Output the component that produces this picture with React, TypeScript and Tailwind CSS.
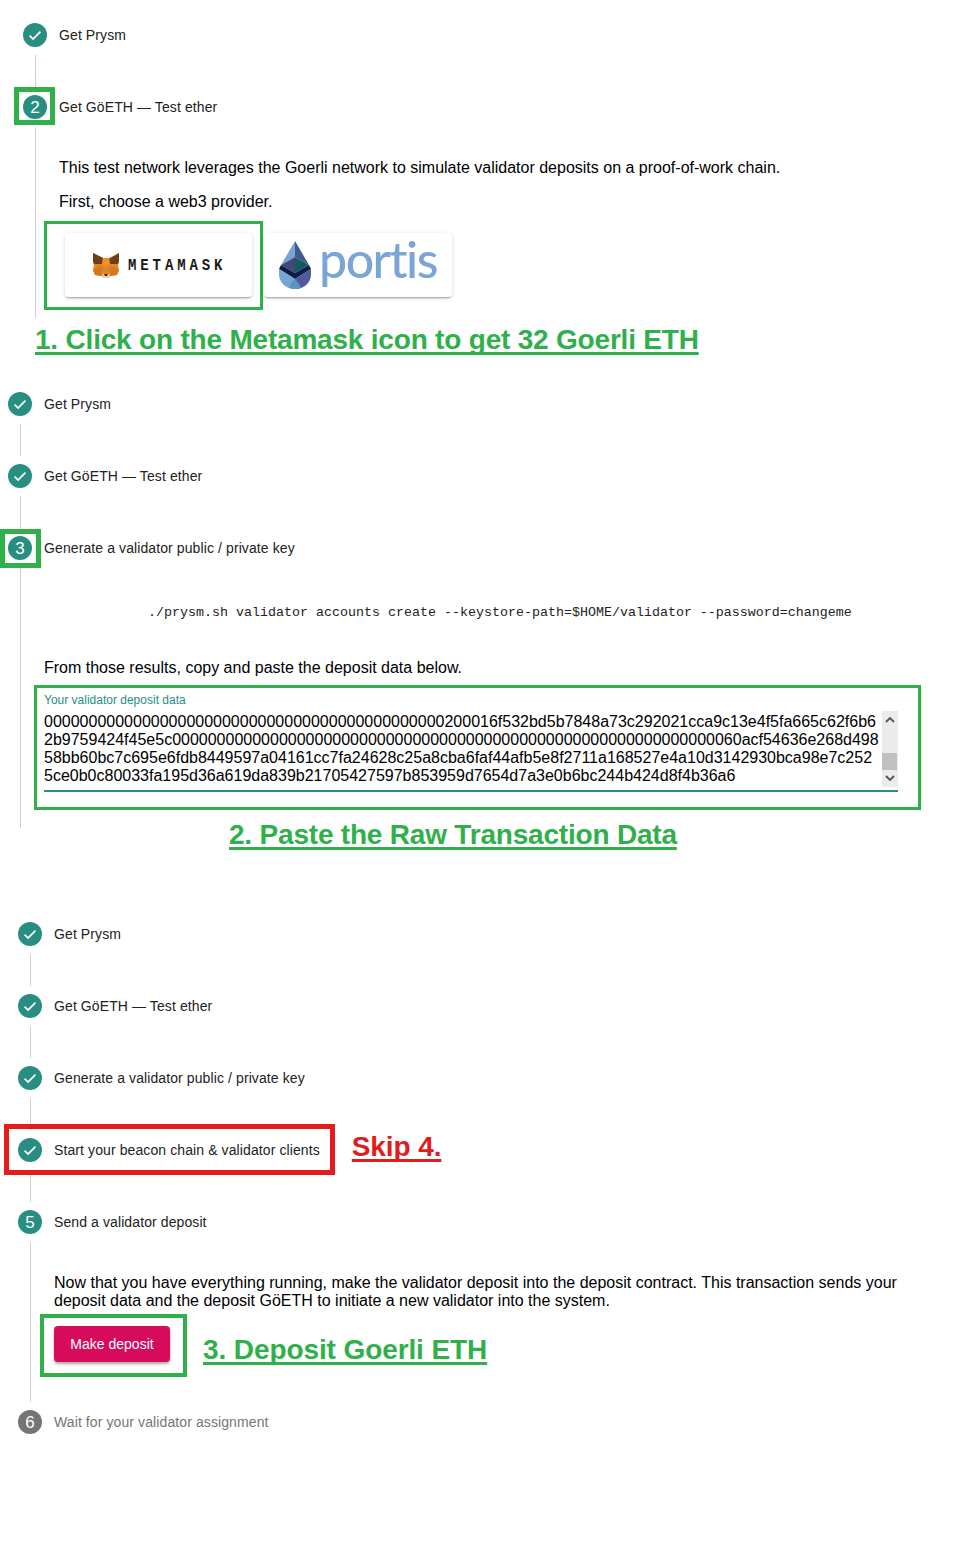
import React from 'react';

const depositLines = [
  '000000000000000000000000000000000000000000000200016f532bd5b7848a73c292021cca9c13e4f5fa665c62f6b6',
  '2b9759424f45e5c0000000000000000000000000000000000000000000000000000000000000060acf54636e268d498',
  '58bb60bc7c695e6fdb8449597a04161cc7fa24628c25a8cba6faf44afb5e8f2711a168527e4a10d3142930bca98e7c252',
  '5ce0b0c80033fa195d36a619da839b21705427597b853959d7654d7a3e0b6bc244b424d8f4b36a6',
];

function CheckIcon() {
  return (
    <span className="flex h-6 w-6 shrink-0 items-center justify-center rounded-full bg-[#288e82]">
      <svg width="24" height="24" viewBox="0 0 24 24" fill="none">
        <path d="M6.6 12.6l3.5 3.4 7.3-7.4" stroke="#fff" strokeWidth="1.7" />
      </svg>
    </span>
  );
}

function NumberIcon({ n, muted }: { n: number; muted?: boolean }) {
  return (
    <span
      className={`flex h-6 w-6 shrink-0 items-center justify-center rounded-full text-[17px] leading-none text-white ${
        muted ? 'bg-[#757575]' : 'bg-[#288e82]'
      }`}
    >
      {n}
    </span>
  );
}

function Step({ icon, label, muted }: { icon: React.ReactNode; label: string; muted?: boolean }) {
  return (
    <div className="flex h-6 items-center gap-3">
      {icon}
      <span className={`text-sm tracking-[0.1px] whitespace-nowrap ${muted ? 'text-[#757575]' : 'text-[#222222]'}`}>
        {label}
      </span>
    </div>
  );
}

function Connector() {
  return <div className="my-2 ml-3 h-8 w-px bg-[#cfcfcf]" />;
}

function Callout({ children, className }: { children: React.ReactNode; className?: string }) {
  return (
    <div
      className={`text-[28px] leading-8 font-bold whitespace-nowrap underline decoration-[3px] underline-offset-[3px] [text-decoration-skip-ink:none] ${className ?? ''}`}
    >
      {children}
    </div>
  );
}

function FoxLogo() {
  return (
    <svg width="26" height="25" viewBox="0 0 26 25">
      <polygon
        points="0,0 10,5 16,5 26,0 26,8 25,12 26,17 24,22 17,23 15,25 11,25 9,23 2,22 0,17 1,12 0,8"
        fill="#e5851f"
      />
      <polygon points="0,0 10,5 9,11 1,11 0,8" fill="#6f3f17" />
      <polygon points="26,0 16,6 17,11 25,11 26,8" fill="#6f3f17" />
      <polygon points="10,5 16,5 17,11 13,15 9,11" fill="#ee8f2a" />
      <polygon points="0,17 8,13 9,23 2,22" fill="#d8771a" />
      <polygon points="26,17 18,13 17,23 24,22" fill="#d8771a" />
      <polygon points="8,14 12,16 10,18" fill="#b9834f" />
      <polygon points="18,14 14,16 16,18" fill="#b9834f" />
      <polygon points="9,21 17,21 15,25 11,25" fill="#e2d2bd" />
      <polygon points="11,21 15,21 14,23 12,23" fill="#33261c" />
    </svg>
  );
}

function PortisLogo() {
  return (
    <svg width="32" height="48" viewBox="0 0 32 48">
      <path d="M16 0L2 24l14-8z" fill="#7aa3d2" />
      <path d="M16 0l14 24-14-8z" fill="#3f5a8c" />
      <path d="M16 16L2 24l14 8z" fill="#3e4a7c" />
      <path d="M16 16l14 8-14 8z" fill="#155a63" />
      <path d="M0 28l2-4 14 8 14-8 2 4-16 10z" fill="#0e1d47" />
      <path d="M0 28l16 10v10C6 48 0 41 0 33z" fill="#78a5d4" />
      <path d="M32 28L16 38v10c10 0 16-7 16-15z" fill="#505a9c" />
      <path d="M16 38c-3 3-5 6-6 8.800 4 1.600 8 1.600 12 0-1-2.800-3-5.800-6-8.800z" fill="#5b95bf" />
    </svg>
  );
}

function ProviderCard({ children, className }: { children: React.ReactNode; className?: string }) {
  return (
    <div
      className={`flex h-16 shrink-0 items-center rounded bg-white shadow-[0_2px_2px_-1px_rgba(0,0,0,0.35),0_1px_5px_rgba(0,0,0,0.12)] ${className ?? ''}`}
    >
      {children}
    </div>
  );
}

function FakeScrollbar() {
  return (
    <div className="flex h-[76px] w-4 shrink-0 flex-col items-center justify-between bg-[#ebebeb] py-[5px]">
      <svg width="10" height="7" viewBox="0 0 10 7" fill="none">
        <path d="M1 6l4-4 4 4" stroke="#555" strokeWidth="1.8" />
      </svg>
      <div className="mt-6 h-[17px] w-[15px] self-start bg-[#c1c1c1]" />
      <svg width="10" height="7" viewBox="0 0 10 7" fill="none">
        <path d="M1 1l4 4 4-4" stroke="#555" strokeWidth="1.8" />
      </svg>
    </div>
  );
}

export default function App() {
  return (
    <div className="h-[1544px] overflow-hidden bg-white font-['Liberation_Sans',Arial,sans-serif] text-black">
      {/* step 2: choose a provider */}
      <section className="pt-[23px] pl-[23px]">
        <Step icon={<CheckIcon />} label="Get Prysm" />
        <Connector />
        <div className="relative">
          <Step icon={<NumberIcon n={2} />} label="Get GöETH — Test ether" />
          <div className="absolute -top-2 -left-[9px] h-[38px] w-[41px] border-[5px] border-[#2fb04b]" />
        </div>
        <div className="mt-2 ml-3 border-l border-[#cfcfcf] pt-8 pb-2 pl-[23px]">
          <p className="text-base leading-[18px]">
            This test network leverages the Goerli network to simulate validator deposits on a proof-of-work chain.
          </p>
          <p className="mt-4 text-base leading-[18px]">First, choose a web3 provider.</p>
          <div className="mt-[10px] -ml-[15px] flex items-start">
            <div className="border-[3px] border-[#2fb04b] pt-[9px] pr-2 pb-[10px] pl-[18px]">
              <ProviderCard className="w-[187px] pl-7">
                <FoxLogo />
                <span className="ml-[9px] inline-block scale-y-[1.2] font-['Liberation_Mono',monospace] text-sm font-bold tracking-[3.9px] text-[#1a1a1a]">
                  METAMASK
                </span>
              </ProviderCard>
            </div>
            <ProviderCard className="mt-3 ml-px w-[188px] pl-[15px]">
              <PortisLogo />
              <span className="-mt-3 ml-[8px] font-['Lato',sans-serif] text-[50px] leading-none font-medium tracking-[-1.5px] text-[#7ba5d5] [font-variant-ligatures:none]">
                portis
              </span>
            </ProviderCard>
          </div>
        </div>
        <Callout className="mt-[6px] ml-3 tracking-[-0.2px] text-[#2fb04b]">
          1. Click on the Metamask icon to get 32 Goerli ETH
        </Callout>
      </section>

      {/* step 3: paste the deposit data */}
      <section className="mt-9 pl-2">
        <Step icon={<CheckIcon />} label="Get Prysm" />
        <Connector />
        <Step icon={<CheckIcon />} label="Get GöETH — Test ether" />
        <Connector />
        <div className="relative">
          <Step icon={<NumberIcon n={3} />} label="Generate a validator public / private key" />
          <div className="absolute -top-[7px] -left-2 h-[39px] w-[41px] border-[5px] border-[#2fb04b]" />
        </div>
        <div className="mt-2 ml-3 h-[260px] border-l border-[#cfcfcf] pt-[37px] pl-[23px]">
          <pre className="pl-[104px] font-['Liberation_Mono',monospace] text-[13.33px] leading-4 text-[#222222]">
            ./prysm.sh validator accounts create --keystore-path=$HOME/validator --password=changeme
          </pre>
          <p className="mt-[38px] text-base leading-[18px]">From those results, copy and paste the deposit data below.</p>
          <div className="mt-2 -ml-[10px] h-[125px] w-[887px] border-[3px] border-[#2fb04b] pt-[5px] pl-[7px]">
            <div className="text-xs leading-[14px] text-[#288e82]">Your validator deposit data</div>
            <div className="mt-1 flex w-[854px] justify-between border-b-2 border-[#288e82] pb-[3px]">
              <div className="pt-[2px] text-base leading-[18px] whitespace-nowrap">
                {depositLines.map((line) => (
                  <div key={line}>{line}</div>
                ))}
              </div>
              <FakeScrollbar />
            </div>
          </div>
        </div>
        <Callout className="-mt-[9px] ml-[221px] tracking-[-0.2px] text-[#2fb04b]">
          2. Paste the Raw Transaction Data
        </Callout>
      </section>

      {/* step 5: make the deposit */}
      <section className="mt-[71px] pl-[18px]">
        <Step icon={<CheckIcon />} label="Get Prysm" />
        <Connector />
        <Step icon={<CheckIcon />} label="Get GöETH — Test ether" />
        <Connector />
        <Step icon={<CheckIcon />} label="Generate a validator public / private key" />
        <Connector />
        <div className="flex h-6 items-start">
          <div className="relative">
            <Step icon={<CheckIcon />} label="Start your beacon chain & validator clients" />
            <div className="absolute -top-[14px] -right-[15px] -bottom-[13px] -left-[14px] border-[5px] border-[#e31b1d]" />
          </div>
          <Callout className="-mt-[7px] ml-8 tracking-[-0.1px] text-[#e31b1d]">Skip 4.</Callout>
        </div>
        <Connector />
        <Step icon={<NumberIcon n={5} />} label="Send a validator deposit" />
        <div className="mt-2 ml-3 h-40 border-l border-[#cfcfcf] pt-8 pl-[23px]">
          <p className="text-base leading-[18px] whitespace-nowrap">
            Now that you have everything running, make the validator deposit into the deposit contract. This transaction sends your
            <br />
            deposit data and the deposit GöETH to initiate a new validator into the system.
          </p>
          <div className="mt-1 -ml-[14px] flex items-start">
            <div className="border-4 border-[#2fb04b] pt-2 pr-[13px] pb-[11px] pl-[10px]">
              <button className="h-9 w-[116px] rounded bg-[#d60b5b] text-sm text-white shadow-[0_2px_3px_rgba(0,0,0,0.35)]">
                Make deposit
              </button>
            </div>
            <Callout className="mt-5 ml-4 tracking-[-0.1px] text-[#2fb04b]">3. Deposit Goerli ETH</Callout>
          </div>
        </div>
        <div className="mt-2">
          <Step icon={<NumberIcon n={6} muted />} label="Wait for your validator assignment" muted />
        </div>
      </section>
    </div>
  );
}
